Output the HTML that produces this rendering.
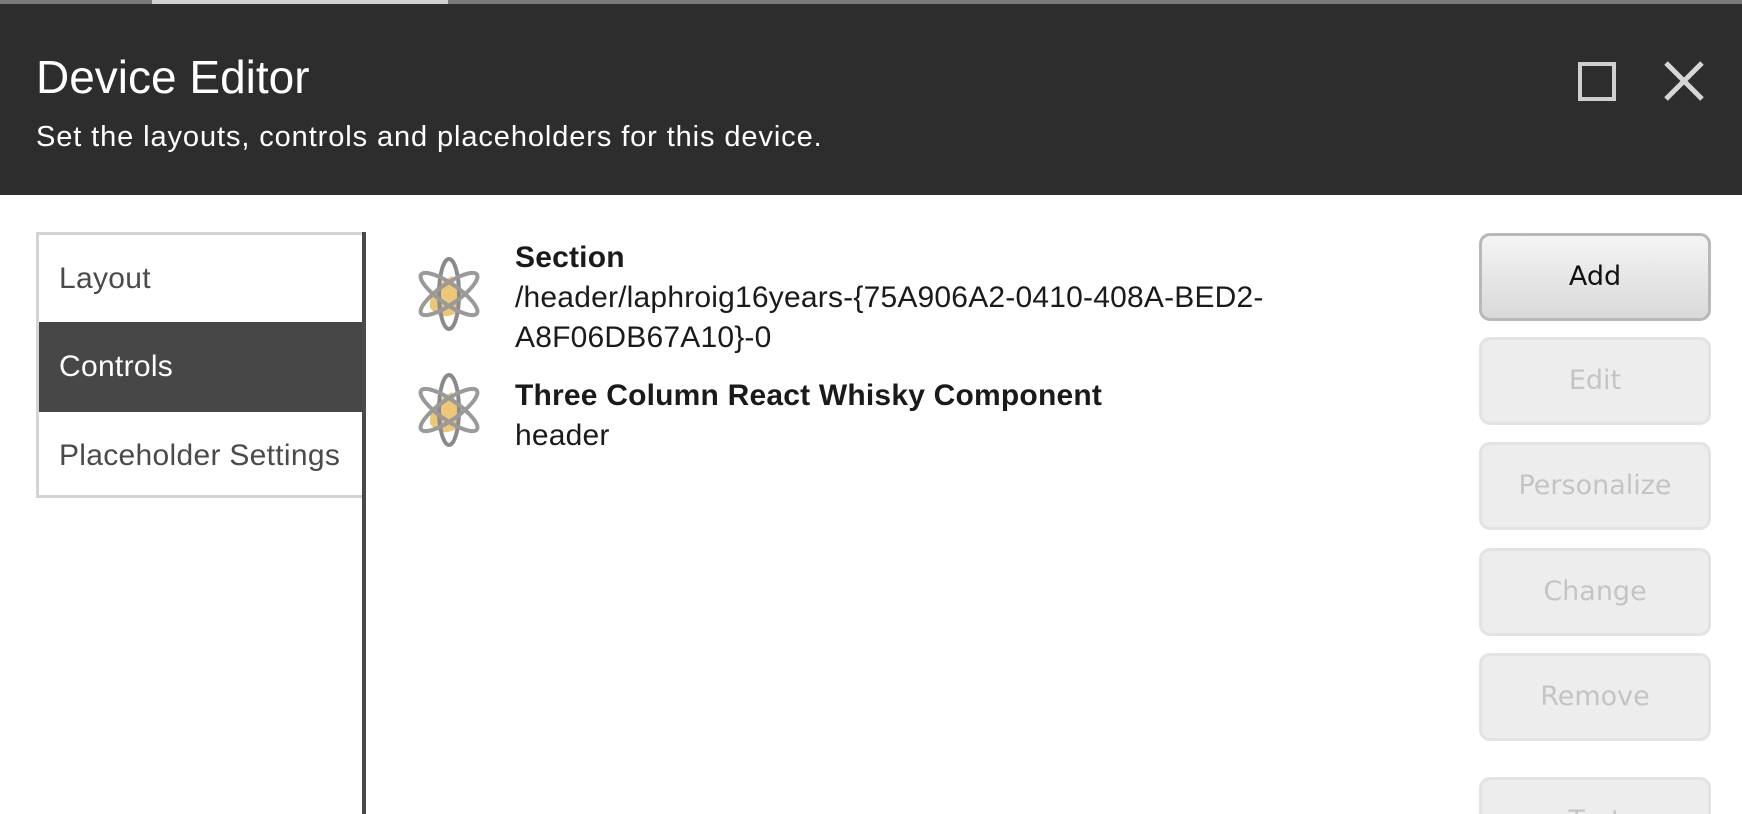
<!DOCTYPE html>
<html><head><meta charset="utf-8"><style>
*{margin:0;padding:0;box-sizing:border-box}
html,body{width:1742px;height:814px;overflow:hidden}
body{background:#fff;font-family:"Liberation Sans",sans-serif;position:relative}
.top{position:absolute;left:0;top:0;width:1742px;height:4px;background:#7a7a7a}
.top i{position:absolute;left:152px;width:296px;height:4px;background:#d2d2d2}
.hdr{position:absolute;left:0;top:4px;width:1742px;height:191px;background:#2d2d2d;color:#fff}
.t1{position:absolute;left:36px;top:46px;font-size:46px}
.t2{position:absolute;left:36px;top:117px;font-size:29px;letter-spacing:0.9px}
.max{position:absolute;left:1578px;top:58px;width:38px;height:39px;border:4px solid #cfcfcf}
.nav{position:absolute;left:36px;top:232px;width:329px;height:266px;border:3px solid #d4d4d4;border-right:none}
.nav div{height:87px;font-size:30px;color:#4a4a4a;padding-left:20px;line-height:87px;letter-spacing:0.3px}
.nav .sel{background:#474747;color:#fff;height:90px;line-height:90px}
.vline{position:absolute;left:362px;top:232px;width:4px;height:582px;background:#4a4a4a}
.item{position:absolute;left:515px;font-size:30px;color:#1a1a1a;line-height:40px;letter-spacing:0.2px}
.item b{font-weight:bold;color:#1a1a1a;letter-spacing:0.2px}
.ic{position:absolute;left:414px}
.btn{position:absolute;left:1479px;width:232px;height:88px;border-radius:11px;border:3px solid #e3e3e3;background:#ededed;color:#c4c4c4;font-family:"DejaVu Sans",sans-serif;font-size:27px;text-align:center;line-height:82px}
.btn.add{background:linear-gradient(#f4f4f4,#d9d9d9);border-color:#b8b8b8;color:#111}
.clip{position:absolute;left:0;top:760px;width:1742px;height:54px;overflow:hidden}
</style></head><body>
<div class="top"><i></i></div>
<div class="hdr">
<div class="t1">Device Editor</div>
<div class="t2">Set the layouts, controls and placeholders for this device.</div>
<div class="max"></div>
<svg style="position:absolute;left:1663px;top:56px" width="42" height="42" viewBox="0 0 42 42"><path d="M3 3L39 39M39 3L3 39" stroke="#d6d6d6" stroke-width="5"/></svg>
</div>
<div class="nav"><div>Layout</div><div class="sel">Controls</div><div>Placeholder Settings</div></div>
<div class="vline"></div>

<svg class="ic" style="top:256px" width="70" height="76" viewBox="0 0 70 76">
<path d="M38 20 Q14 32 16 52 Q28 66 44 56 Q46 38 38 20Z" fill="#eec776"/>
<ellipse cx="35" cy="38" rx="10" ry="35" fill="none" stroke="#8a8a8a" stroke-width="4"/>
<ellipse cx="35" cy="38" rx="10" ry="34" fill="none" stroke="#9a9a9a" stroke-width="4" transform="rotate(55 35 38)"/>
<ellipse cx="35" cy="38" rx="10" ry="34" fill="none" stroke="#9a9a9a" stroke-width="4" transform="rotate(-55 35 38)"/>
</svg>
<svg class="ic" style="top:372px" width="70" height="76" viewBox="0 0 70 76">
<path d="M38 20 Q14 32 16 52 Q28 66 44 56 Q46 38 38 20Z" fill="#eec776"/>
<ellipse cx="35" cy="38" rx="10" ry="35" fill="none" stroke="#8a8a8a" stroke-width="4"/>
<ellipse cx="35" cy="38" rx="10" ry="34" fill="none" stroke="#9a9a9a" stroke-width="4" transform="rotate(55 35 38)"/>
<ellipse cx="35" cy="38" rx="10" ry="34" fill="none" stroke="#9a9a9a" stroke-width="4" transform="rotate(-55 35 38)"/>
</svg>
<div class="item" style="top:238px"><b>Section</b><br>/header/laphroig16years-{75A906A2-0410-408A-BED2-<br>A8F06DB67A10}-0</div>
<div class="item" style="top:376px"><b>Three Column React Whisky Component</b><br>header</div>

<div class="btn add" style="top:233px">Add</div>
<div class="btn" style="top:337px">Edit</div>
<div class="btn" style="top:442px">Personalize</div>
<div class="btn" style="top:548px">Change</div>
<div class="btn" style="top:653px">Remove</div>
<div class="clip"><div class="btn" style="top:17px">Test</div></div>
</body></html>
